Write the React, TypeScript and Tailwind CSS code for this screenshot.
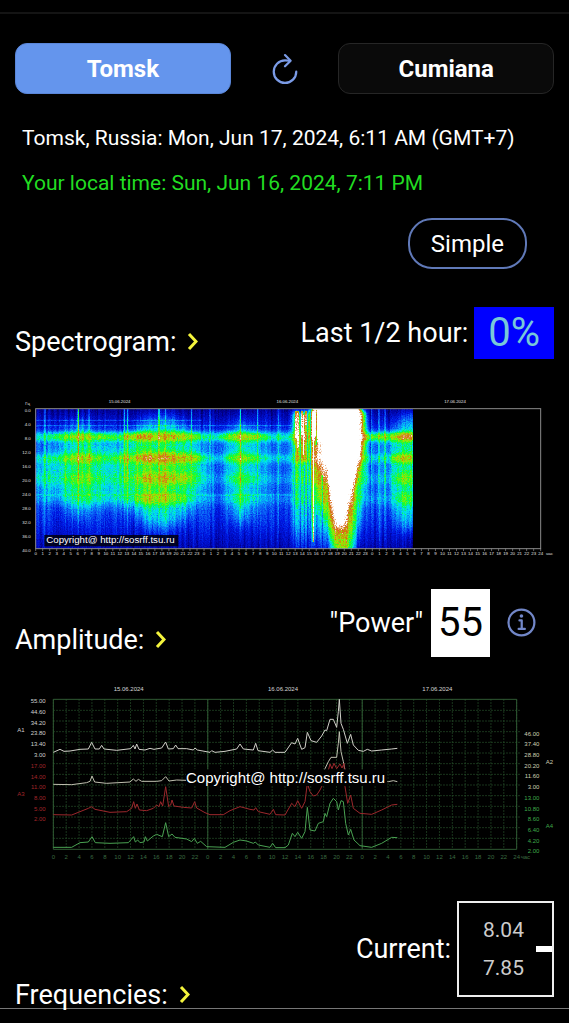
import type { ReactNode } from 'react';
import { IoInformationCircleOutline, IoRefreshOutline } from 'react-icons/io5';

const COPYRIGHT = 'Copyright@ http://sosrff.tsu.ru';

const DAYS = ['15.06.2024', '16.06.2024', '17.06.2024'];

// Resonance bands of the spectrogram: centre line, height and strength
const BANDS = [
  { y: 125, h: 24, level: 0.22 },
  { y: 190, h: 22, level: 0.15 },
  { y: 252, h: 28, level: 0.07 },
  { y: 312, h: 28, level: 0.06 },
];

// Local maxima on the bands
const SPOTS = [
  { x: 190, y: 125, rx: 85, ry: 14, level: 0.14 },
  { x: 320, y: 125, rx: 80, ry: 13, level: 0.12 },
  { x: 445, y: 123, rx: 120, ry: 16, level: 0.16 },
  { x: 680, y: 125, rx: 75, ry: 14, level: 0.17 },
  { x: 195, y: 191, rx: 60, ry: 14, level: 0.09 },
  { x: 330, y: 191, rx: 30, ry: 13, level: 0.08 },
  { x: 460, y: 188, rx: 105, ry: 17, level: 0.18 },
  { x: 680, y: 190, rx: 50, ry: 15, level: 0.12 },
  { x: 195, y: 250, rx: 50, ry: 20, level: 0.05 },
  { x: 445, y: 250, rx: 85, ry: 19, level: 0.13 },
  { x: 680, y: 252, rx: 42, ry: 20, level: 0.07 },
  { x: 440, y: 312, rx: 80, ry: 18, level: 0.15 },
  { x: 680, y: 312, rx: 36, ry: 20, level: 0.04 },
  { x: 1150, y: 125, rx: 110, ry: 13, level: 0.2 },
  { x: 1185, y: 125, rx: 40, ry: 10, level: 0.2 },
  { x: 1188, y: 190, rx: 60, ry: 16, level: 0.2 },
  { x: 1190, y: 250, rx: 45, ry: 24, level: 0.15 },
  { x: 1190, y: 310, rx: 40, ry: 26, level: 0.12 },
];

// Wide vertical glows around the spots
const GLOWS = [
  { x: 190, y: 220, rx: 60, ry: 150, level: 0.14 },
  { x: 300, y: 240, rx: 260, ry: 90, level: 0.14 },
  { x: 440, y: 230, rx: 120, ry: 170, level: 0.2 },
  { x: 680, y: 230, rx: 50, ry: 155, level: 0.18 },
  { x: 1185, y: 230, rx: 60, ry: 180, level: 0.24 },
];

const STREAKS = [
  { x: 90, level: 0.22 },
  { x: 190, level: 0.38 },
  { x: 222, level: 0.18 },
  { x: 328, level: 0.22 },
  { x: 338, level: 0.22 },
  { x: 432, level: 0.4 },
  { x: 452, level: 0.2 },
  { x: 530, level: 0.2 },
  { x: 585, level: 0.2 },
  { x: 676, level: 0.3 },
  { x: 728, level: 0.22 },
  { x: 790, level: 0.16 },
  { x: 1070, level: 0.2 },
  { x: 1092, level: 0.22 },
  { x: 1110, level: 0.16 },
];

const SERIES = [
  {
    name: 'A1',
    color: '#d0d0c8',
    points:
      '130,217 150,208 162,214 180,213 210,208 235,207 245,187 255,207 268,207 275,196 282,207 320,211 362,206 370,196 375,207 380,192 387,208 405,210 420,205 432,208 455,204 467,186 475,207 490,206 497,195 504,206 530,206 550,210 555,204 562,210 600,217 605,212 615,217 645,214 680,207 690,192 700,207 730,210 737,190 744,212 780,217 788,210 795,217 825,217 845,188 855,192 863,175 875,208 885,203 892,157 903,182 920,187 935,168 945,150 950,152 960,118 970,118 980,142 985,95 988,58 993,130 1000,148 1012,190 1022,163 1030,195 1045,211 1060,214 1072,208 1085,213 1115,210 1145,207 1162,205',
  },
  {
    name: 'A2',
    color: '#c0c0b0',
    points:
      '130,313 185,314 230,308 240,304 246,288 254,306 290,310 360,306 370,297 378,304 385,298 395,304 440,304 455,302 467,290 477,303 500,300 528,301 600,304 800,304 930,300 945,266 955,245 963,232 980,232 985,190 988,155 993,215 1000,245 1005,270 1030,300 1135,305 1150,302 1162,305',
  },
  {
    name: 'A3',
    color: '#9c282c',
    points:
      '130,404 185,405 210,395 235,385 245,380 255,388 300,397 350,395 365,385 371,365 376,385 381,372 388,390 410,392 430,385 440,375 447,380 452,365 458,378 467,320 476,380 482,375 486,360 492,378 520,382 545,384 554,365 560,384 585,398 600,404 640,404 660,392 690,380 720,388 732,390 737,383 745,395 780,403 790,388 797,404 825,405 845,370 855,380 863,362 875,385 885,365 892,310 900,335 910,348 920,345 930,330 940,310 950,290 960,252 966,266 972,250 980,266 990,252 996,264 1002,250 1005,320 1013,370 1022,345 1030,385 1050,400 1085,403 1115,390 1145,375 1162,373',
  },
  {
    name: 'A4',
    color: '#4aa252',
    points:
      '130,502 185,502 210,488 235,486 246,470 256,488 300,490 355,488 371,470 376,486 383,480 390,488 402,486 406,470 412,483 430,468 440,463 457,470 467,428 476,470 486,462 495,472 530,477 545,485 553,475 562,490 572,484 590,500 645,502 670,487 690,480 710,483 730,490 736,486 745,495 780,502 788,490 797,503 825,503 835,495 847,460 855,470 863,457 875,475 885,455 892,382 900,450 915,453 925,430 940,425 945,400 950,410 960,370 970,355 980,365 985,390 993,362 1000,365 1007,430 1015,465 1022,448 1032,480 1050,497 1085,502 1115,490 1145,472 1162,473',
  },
];

const SCALES = [
  { name: 'A1', x: 33, y: 149, labelX: 107, top: 63, color: '#d0d0d0', values: ['55.00', '44.60', '34.20', '23.80', '13.40', '3.00'] },
  { name: 'A3', x: 33, y: 342, labelX: 107, top: 257, color: '#a3262a', values: ['17.00', '14.00', '11.00', '8.00', '5.00', '2.00'] },
  { name: 'A2', x: 1618, y: 245, labelX: 1588, top: 160, color: '#cfcfb4', values: ['46.00', '37.40', '28.80', '20.20', '11.60', '3.00'] },
  { name: 'A4', x: 1618, y: 438, labelX: 1588, top: 353, color: '#3fa84a', values: ['13.00', '10.80', '8.60', '6.40', '4.20', '2.00'] },
];

function Spectrogram() {
  const left = 62;
  const right = 1577;
  const hour = (right - left) / 72;

  return (
    <svg
      viewBox="0 0 1617 510"
      className="block h-auto w-full font-['Liberation_Sans',sans-serif]"
      role="img"
      aria-label="Spectrogram"
    >
      <defs>
        <linearGradient id="base" x1="0" y1="0" x2="0" y2="1">
          <stop offset="0" stopColor="#161616" />
          <stop offset="0.14" stopColor="#343434" />
          <stop offset="0.22" stopColor="#484848" />
          <stop offset="0.65" stopColor="#424242" />
          <stop offset="0.82" stopColor="#343434" />
          <stop offset="1" stopColor="#202020" />
        </linearGradient>
        <linearGradient id="streak" x1="0" y1="0" x2="0" y2="1">
          <stop offset="0" stopColor="#fff" />
          <stop offset="0.4" stopColor="#fff" stopOpacity="0.8" />
          <stop offset="1" stopColor="#fff" stopOpacity="0.1" />
        </linearGradient>
        <linearGradient id="storm" x1="0" y1="0" x2="0" y2="1">
          <stop offset="0" stopColor="#fff" stopOpacity="0.42" />
          <stop offset="0.5" stopColor="#fff" stopOpacity="0.3" />
          <stop offset="0.8" stopColor="#fff" stopOpacity="0.22" />
          <stop offset="1" stopColor="#fff" stopOpacity="0.08" />
        </linearGradient>
        <filter id="soft">
          <feGaussianBlur stdDeviation="6" />
        </filter>
        <filter id="core" x="-50%" y="-50%" width="200%" height="200%">
          <feGaussianBlur stdDeviation="10" />
        </filter>
        <filter id="softer" x="-50%" y="-50%" width="200%" height="200%">
          <feGaussianBlur stdDeviation="20" />
        </filter>
        {/* grey level + noise, mapped to the blue-green-red-white palette */}
        <filter
          id="palette"
          filterUnits="userSpaceOnUse"
          x={left}
          y="42"
          width="1130"
          height="418"
          colorInterpolationFilters="sRGB"
        >
          <feTurbulence type="fractalNoise" baseFrequency="0.28" numOctaves="2" seed="4" />
          <feColorMatrix values="1 0 0 0 0 1 0 0 0 0 1 0 0 0 0 0 0 0 0 1" result="grain" />
          <feTurbulence type="fractalNoise" baseFrequency="0.12 0.002" numOctaves="2" seed="9" />
          <feColorMatrix values="1 0 0 0 0 1 0 0 0 0 1 0 0 0 0 0 0 0 0 1" result="lines" />
          <feComposite in="SourceGraphic" in2="grain" operator="arithmetic" k1="0.36" k2="0.97" k3="0.1" k4="-0.05" />
          <feComposite in2="lines" operator="arithmetic" k2="1" k3="0.22" k4="-0.11" />
          <feComponentTransfer>
            <feFuncR type="table" tableValues="0 0 0 0.05 0 0.05 0.65 0.85 1 1" />
            <feFuncG type="table" tableValues="0 0 0.1 0.45 0.88 1 0.9 0.4 1 1" />
            <feFuncB type="table" tableValues="0.15 0.6 0.9 0.98 0.95 0.2 0 0.08 1 1" />
            <feFuncA type="linear" slope="0" intercept="1" />
          </feComponentTransfer>
        </filter>
      </defs>

      <g filter="url(#palette)">
        <rect x={left} y="42" width="1130" height="418" fill="url(#base)" />
        <g filter="url(#softer)">
          {GLOWS.map((g) => (
            <ellipse key={g.x} cx={g.x} cy={g.y} rx={g.rx} ry={g.ry} fill="#fff" fillOpacity={g.level} />
          ))}
        </g>
        <g filter="url(#soft)">
          {BANDS.map((b) => (
            <rect key={b.y} x="40" y={b.y - b.h / 2} width="1180" height={b.h} fill="#fff" fillOpacity={b.level} />
          ))}
          {SPOTS.map((s) => (
            <ellipse key={`${s.x}-${s.y}`} cx={s.x} cy={s.y} rx={s.rx} ry={s.ry} fill="#fff" fillOpacity={s.level} />
          ))}
        </g>
        {STREAKS.map((s) => (
          <rect key={s.x} x={s.x - 2} y="42" width="4" height="400" fill="url(#streak)" fillOpacity={s.level} />
        ))}
        <path d="M62 76H560M62 92H830M62 300H830" stroke="#fff" strokeOpacity="0.12" strokeWidth="3" />

        <g filter="url(#soft)">
          <path d="M832 48H1052V250L1030 470H832Z" fill="url(#storm)" />
          <path d="M842 60H875V200H842Z" fill="#fff" fillOpacity="0.2" />
          <path d="M893 50L1050 50L1050 150L1024 260L1020 475L948 475L938 400L893 240Z" fill="#fff" fillOpacity="0.24" />
          <path d="M900 150H1042L1024 220L1012 320L1004 475H962L940 270L915 220L900 210Z" fill="#fff" fillOpacity="0.28" />
        </g>
        <g filter="url(#core)">
          <path d="M893 20H1036L1032 150L1020 230L1004 290L990 350L980 400H970L960 330L948 250L932 190L916 130L893 120Z" fill="#fff" />
        </g>
        <path
          d="M843 48V130M849 48V160M861 48V120M866 60V180M873 48V90M895 48V440"
          stroke="#fff"
          strokeOpacity="0.6"
          strokeWidth="4"
        />
        <path
          d="M839 150V460M856 46V460M878 46V460M869 200V460M886 46V460M904 46V150M906 360V460M922 240V460"
          stroke="#000"
          strokeOpacity="0.25"
          strokeWidth="4"
        />
      </g>

      <rect x={left} y="41" width={right - left} height="420" fill="none" stroke="#8a8a8a" strokeWidth="3" />
      <path
        d={Array.from({ length: 73 }, (_, i) => `M${left + i * hour} 461v7`).join('')}
        stroke="#999"
        strokeWidth="2"
      />

      <g fill="#e0e0e0" fontSize="13">
        {DAYS.map((day, i) => (
          <text key={day} x={314 + i * 503} y="25" textAnchor="middle">
            {day}
          </text>
        ))}
        <text x="45" y="31" textAnchor="end">
          Гц
        </text>
        {Array.from({ length: 11 }, (_, i) => (
          <text key={i} x="47" y={50 + i * 42} textAnchor="end">
            {(i * 4).toFixed(1)}
          </text>
        ))}
        {Array.from({ length: 73 }, (_, i) => (
          <text key={i} x={left + i * hour} y="481" textAnchor="middle">
            {i === 72 ? 24 : i % 24}
          </text>
        ))}
        <text x="1593" y="481">
          час
        </text>
      </g>

      <rect x="88" y="420" width="402" height="34" fill="#000" fillOpacity="0.8" />
      <text x="94" y="445" fontSize="29" fill="#fff">
        {COPYRIGHT}
      </text>
    </svg>
  );
}

function AmplitudeChart() {
  const left = 130;
  const right = 1520;
  const top = 58;
  const bottom = 508;
  const step = (right - left) / 36;
  const columns = Array.from({ length: 37 }, (_, i) => left + i * step);
  const rows = Array.from({ length: 13 }, (_, i) => 91 + i * 32);

  return (
    <svg
      viewBox="15 0 1617 570"
      className="block h-auto w-full font-['Liberation_Sans',sans-serif]"
      role="img"
      aria-label="Amplitude chart"
    >
      <path
        d={columns.map((x) => `M${x} ${top}V${bottom}`).join('') + rows.map((y) => `M${left} ${y}H${right + 10}`).join('')}
        stroke="#264f2a"
        strokeWidth="3"
        strokeDasharray="4 5"
      />
      <path
        d={`M${left} ${top}H${right}V${bottom}H${left}ZM${columns[12]} ${top}V${bottom}M${columns[24]} ${top}V${bottom}`}
        fill="none"
        stroke="#2f5a33"
        strokeWidth="3"
      />

      {SERIES.map((s) => (
        <polyline key={s.name} points={s.points} fill="none" stroke={s.color} strokeWidth="3" strokeLinejoin="round" />
      ))}

      {SCALES.map((s) => (
        <g key={s.name} fill={s.color} fontSize="18">
          <text x={s.x} y={s.y + 6} textAnchor="middle">
            {s.name}
          </text>
          {s.values.map((value, i) => (
            <text key={value} x={s.labelX} y={s.top + 7 + i * 32} textAnchor="end">
              {value}
            </text>
          ))}
        </g>
      ))}

      <g fill="#d6d6d6" fontSize="18">
        {DAYS.map((day, i) => (
          <text key={day} x={356 + i * 463} y="34" textAnchor="middle">
            {day}
          </text>
        ))}
      </g>
      <g fill="#3b6b41" fontSize="18">
        {columns.map((x, i) => (
          <text key={x} x={x} y="538" textAnchor="middle">
            {i === 36 ? 24 : (i * 2) % 24}
          </text>
        ))}
        <text x="1532" y="538">
          час
        </text>
      </g>

      <rect x="528" y="268" width="604" height="50" fill="#000" />
      <text x="528" y="308" fontSize="45" fill="#fff">
        {COPYRIGHT}
      </text>
    </svg>
  );
}

interface SectionTitleProps {
  children: ReactNode;
}

function SectionTitle({ children }: SectionTitleProps) {
  return (
    <h2>
      <a href="#" className="flex items-center gap-2.5 text-[27px] leading-[26px]">
        {children}
        <svg viewBox="0 0 12 20" className="h-5 w-3" fill="none" stroke="#f4f43c" strokeWidth="3">
          <path d="M3 2L10 9.500L3 17" />
        </svg>
      </a>
    </h2>
  );
}

export default function App() {
  return (
    <div className="min-h-screen bg-black pt-3 font-['Roboto',sans-serif] text-white">
      <main className="border-t-2 border-b border-t-[#141414] border-b-[#777] px-[15px] pt-[29px]">
        <div className="flex items-center justify-between">
          <button className="h-[51px] w-2/5 rounded-xl border border-[#5a86d8] bg-[#6495ed] text-2xl font-bold">
            Tomsk
          </button>
          <button aria-label="Refresh" className="text-[#7b9be6]">
            <IoRefreshOutline size={36} />
          </button>
          <button className="h-[51px] w-2/5 rounded-xl border border-[#262626] bg-[#0a0a0a] text-2xl font-bold">
            Cumiana
          </button>
        </div>

        <div className="mt-[22px] px-[7px] text-[21px] leading-[45px]">
          <p>Tomsk, Russia: Mon, Jun 17, 2024, 6:11 AM (GMT+7)</p>
          <p className="text-[#22dd22]">Your local time: Sun, Jun 16, 2024, 7:11 PM</p>
        </div>

        <div className="mt-3 flex justify-end pr-[27px]">
          <button className="h-[51px] rounded-3xl border-2 border-[#6079b8] px-[21px] text-2xl">Simple</button>
        </div>

        <section className="mt-[38px]">
          <div className="flex items-end justify-between">
            <div className="pb-1">
              <SectionTitle>Spectrogram:</SectionTitle>
            </div>
            <div className="flex items-center gap-1.5">
              <span className="text-[27px] leading-none">Last 1/2 hour:</span>
              <span className="bg-[#0000ff] px-3.5 py-1.5 text-[40px] leading-10 text-[#78c8d8]">0%</span>
            </div>
          </div>
          <div className="mt-9">
            <Spectrogram />
          </div>
        </section>

        <section className="mt-6">
          <div className="flex items-end justify-between">
            <div className="pb-1">
              <SectionTitle>Amplitude:</SectionTitle>
            </div>
            <div className="flex items-center pr-3.5">
              <span className="text-[27px] leading-none">"Power"</span>
              <span className="mr-3.5 ml-2 bg-white px-[7px] py-3.5 text-[40px] leading-10 text-black">55</span>
              <button aria-label="About power" className="text-[#7287c8]">
                <IoInformationCircleOutline size={36} />
              </button>
            </div>
          </div>
          <div className="mt-[23px]">
            <AmplitudeChart />
          </div>
        </section>

        <section className="mt-[31px] flex items-end justify-between">
          <SectionTitle>Frequencies:</SectionTitle>
          <div className="mb-[11px] flex items-center gap-1.5">
            <span className="text-[27px] leading-none">Current:</span>
            <div className="flex h-24 w-[97px] items-center justify-between border-2 border-[#eee] pl-6">
              <div className="text-[21px] leading-[38px] text-[#ccc]">
                <p>8.04</p>
                <p>7.85</p>
              </div>
              <div className="h-1.5 w-4 bg-white" />
            </div>
          </div>
        </section>
      </main>
    </div>
  );
}
